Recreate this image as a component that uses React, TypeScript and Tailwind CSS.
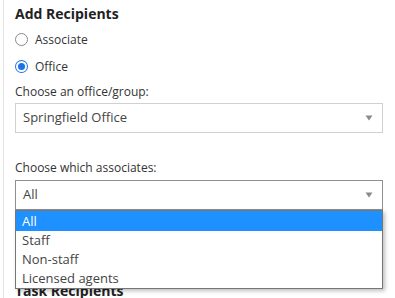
const options = ['All', 'Staff', 'Non-staff', 'Licensed agents'];

function Caret() {
  return (
    <svg width="8" height="6" viewBox="0 0 8 6" className="shrink-0">
      <path d="M0.5 0.5 L7.5 0.5 L4 5.5 Z" fill="#8a8a8a" />
    </svg>
  );
}

function Radio({ checked, label }: { checked: boolean; label: string }) {
  return (
    <label className="flex items-center gap-[7px] h-[27px] text-[12px] text-[#333]">
      {checked ? (
        <span className="w-[13px] h-[13px] rounded-full bg-[#1a73e8] flex items-center justify-center">
          <span className="w-[11px] h-[11px] rounded-full bg-white flex items-center justify-center">
            <span className="w-[7px] h-[7px] rounded-full bg-[#1a73e8]" />
          </span>
        </span>
      ) : (
        <span className="w-[13px] h-[13px] rounded-full border border-[#8a8a8a] bg-white" />
      )}
      {label}
    </label>
  );
}

export default function App() {
  return (
    <div className="w-[395px] h-[298px] overflow-hidden bg-white" style={{ fontFamily: '"Open Sans", sans-serif' }}>
      <div className="h-full ml-[3px] border-l border-[#e3e3e3] pl-[11px] pr-[12px] pt-[3px]">
        <h2 className="text-[14px] font-bold text-[#222] leading-[22px] mb-[1px]">Add Recipients</h2>
        <Radio checked={false} label="Associate" />
        <Radio checked label="Office" />
        <div className="text-[12px] text-[#333] leading-[18px] mt-[3px]">Choose an office/group:</div>
        <div className="mt-[2px] h-[30px] border border-[#d0d0d0] flex items-center justify-between pl-[7px] pr-[9px] text-[13px] text-[#444]">
          <span>Springfield Office</span>
          <Caret />
        </div>
        <div className="text-[12px] text-[#333] leading-[18px] mt-[26px]">Choose which associates:</div>
        <div className="relative mt-[3px]">
          <div className="h-[30px] border border-[#8f8f8f] flex items-center justify-between pl-[7px] pr-[9px] text-[13px] text-[#444]">
            <span>All</span>
            <Caret />
          </div>
          <ul className="absolute left-0 right-0 top-[30px] z-10 bg-white border border-[#767676] shadow-[2px_2px_4px_rgba(0,0,0,0.25)] text-[13px] text-[#444]">
            {options.map((o, i) => (
              <li
                key={o}
                className={i === 0 ? 'h-[20px] leading-[20px] pl-[6px] bg-[#1e90ff] text-white' : 'h-[19px] leading-[19px] pl-[6px]'}
              >
                {o}
              </li>
            ))}
          </ul>
          <h2 className="text-[14px] font-bold text-[#222] leading-[20px] mt-[71px]">Task Recipients</h2>
        </div>
      </div>
    </div>
  );
}
